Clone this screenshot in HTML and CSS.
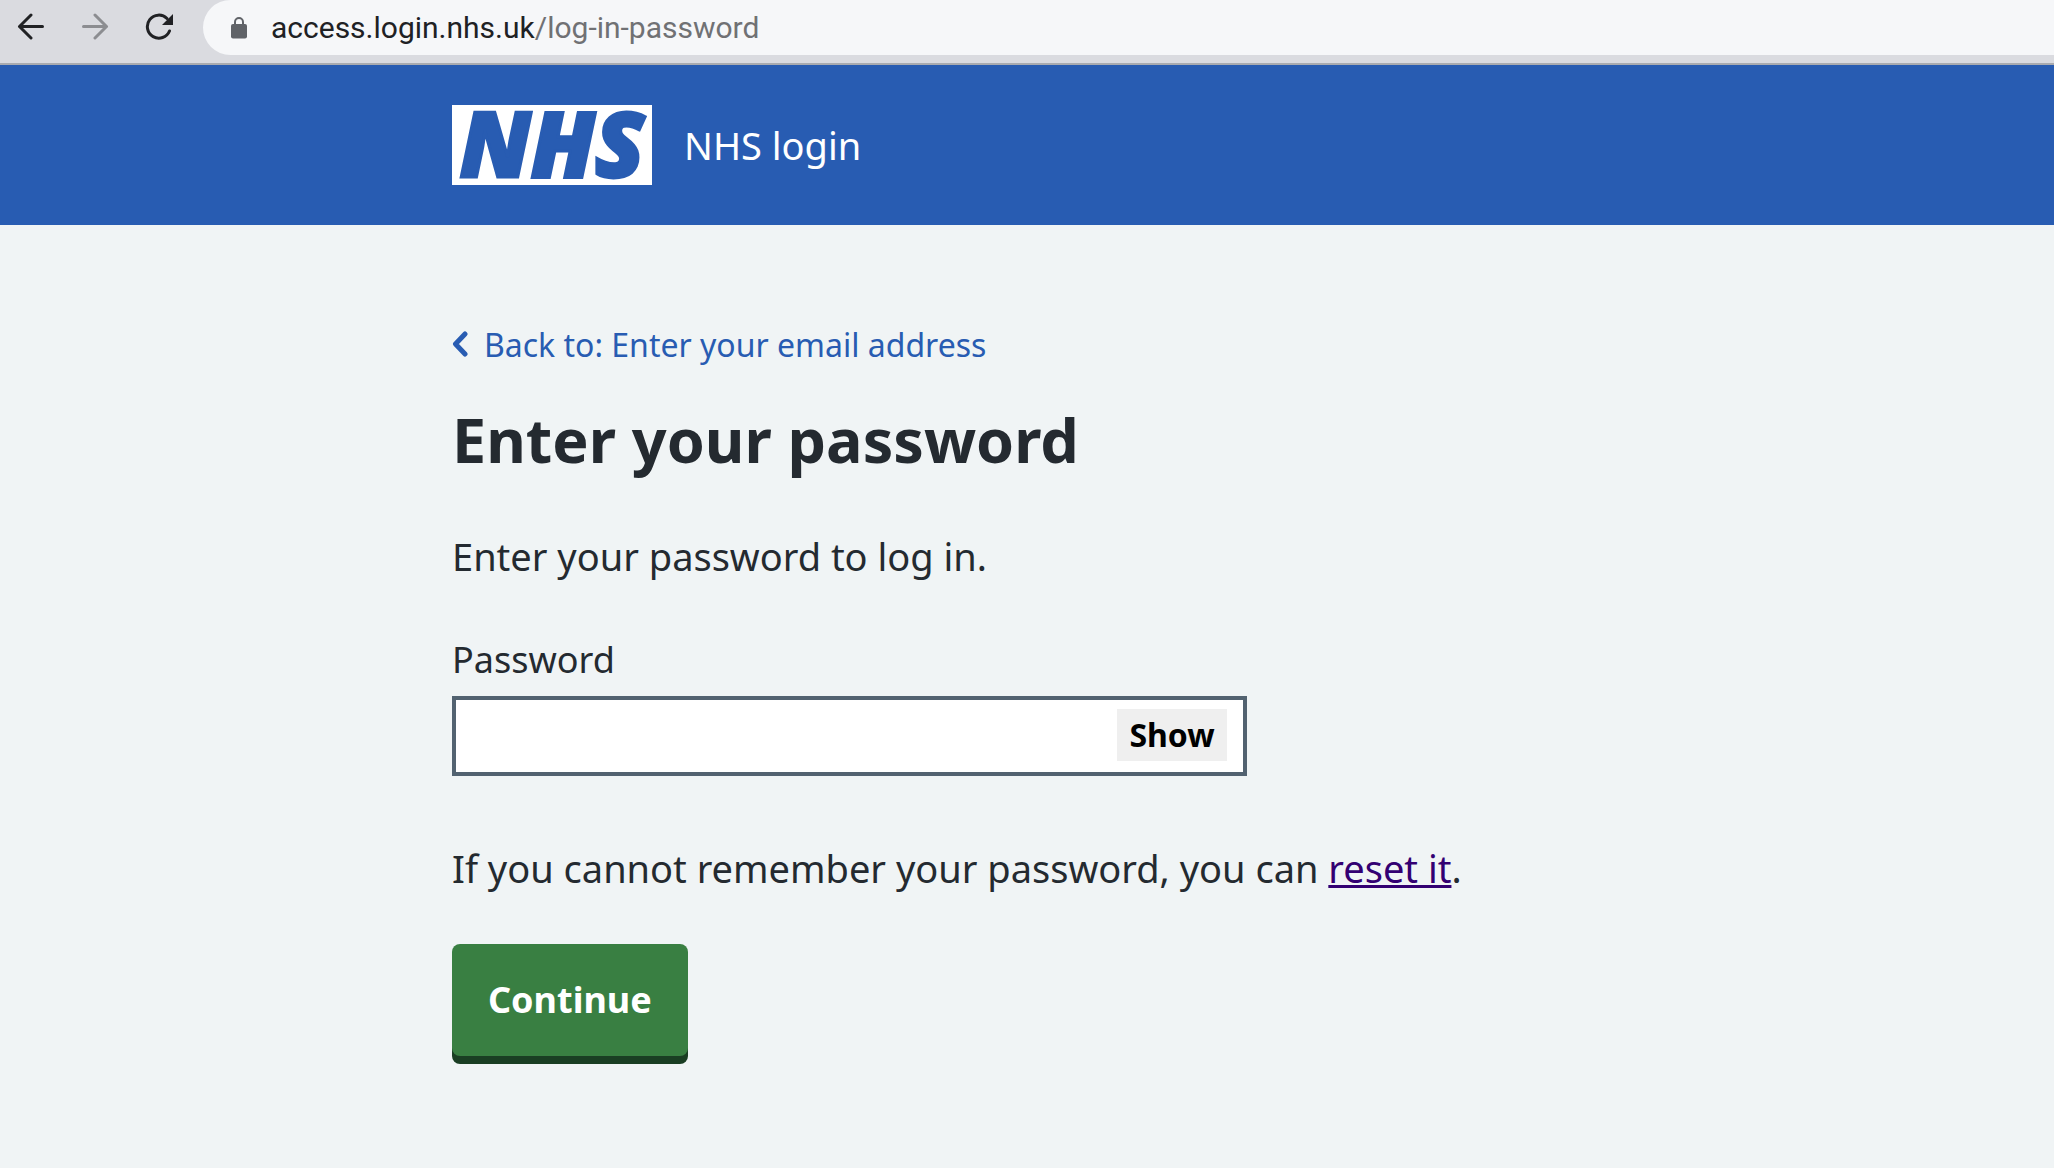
FILE: index.html
```html
<!DOCTYPE html>
<html lang="en">
<head>
    <meta charset="UTF-8">
    <meta name="viewport" content="width=device-width, initial-scale=1.0">
    <title>Enter your password - NHS login</title>
    <link rel="stylesheet" href="styles.css">
</head>
<body>
    <div class="browser-bar">
        <div class="nav-buttons">
            <button class="nav-button" type="button" aria-label="Back">
                <svg width="28" height="28" viewBox="0 0 28 28"><path d="M25.500 14.500H2.500M14 3L2.500 14.500 14 26"/></svg>
            </button>
            <button class="nav-button disabled" type="button" aria-label="Forward">
                <svg width="28" height="28" viewBox="0 0 28 28"><path d="M2.500 14.500h23M14 3l11.500 11.500L14 26"/></svg>
            </button>
            <button class="nav-button" type="button" aria-label="Reload">
                <svg width="28" height="28" viewBox="0 0 28 28"><path d="M24.500 19A11.500 11.500 0 1 1 22 6.500"/><path class="solid" d="M28 2v11H17z"/></svg>
            </button>
        </div>
        <div class="address">
            <svg class="lock" width="16" height="22" viewBox="0 0 16 22"><rect x="0" y="7" width="16" height="14.500" rx="2"/><path d="M4 8V5a4 4 0 0 1 8 0v3"/></svg>
            <span class="url">access.login.nhs.uk<span class="path">/log-in-password</span></span>
        </div>
    </div>

    <header class="header">
        <div class="container header-content">
            <div class="logo">NHS</div>
            <span class="service-name">NHS login</span>
        </div>
    </header>

    <main class="container main">
        <a class="back-link" href="#">
            <svg width="16" height="28" viewBox="0 0 16 28"><path d="M13 3L3.500 13 13 23"/></svg>
            <span>Back to: Enter your email address</span>
        </a>
        <h1>Enter your password</h1>
        <p class="intro">Enter your password to log in.</p>
        <form>
            <label for="password">Password</label>
            <div class="password-field">
                <input type="password" id="password" name="password">
                <button class="show-button" type="button">Show</button>
            </div>
            <p class="reset">If you cannot remember your password, you can <a href="#">reset it</a>.</p>
            <button class="continue-button" type="submit">Continue</button>
        </form>
    </main>
</body>
</html>
```

FILE: styles.css
```css
:root {
    --blue: #285cb2;
    --text: #242a30;
    --background: #f0f4f5;
    --green: #397f42;
    --dark-green: #1a3e23;
    --border: #526270;
    --visited: #330072;
}

* {
    margin: 0;
    padding: 0;
    box-sizing: border-box;
}

body {
    background-color: var(--background);
    color: var(--text);
    font-family: 'Noto Sans', 'Open Sans', sans-serif;
    font-size: 36px;
    line-height: 56px;
}

.browser-bar {
    display: flex;
    align-items: flex-start;
    height: 65px;
    padding-left: 17px;
    background: #dadbe0;
    border-bottom: 2px solid #a9abb0;
}

.nav-buttons {
    display: flex;
    gap: 36px;
    padding: 12px 30px 0 0;
}

.nav-button {
    width: 28px;
    height: 28px;
    background: none;
    border: none;
    cursor: pointer;
}

.nav-button svg {
    display: block;
    fill: none;
    stroke: #202124;
    stroke-width: 3;
    stroke-linecap: round;
    stroke-linejoin: round;
}

.nav-button.disabled svg {
    stroke: #8c8d91;
}

.nav-button .solid {
    fill: #202124;
    stroke: none;
}

.address {
    flex: 1;
    display: flex;
    align-items: center;
    gap: 24px;
    height: 55px;
    padding-left: 28px;
    background: #f6f7f9;
    border-radius: 28px 0 0 28px;
}

.lock rect {
    fill: #606368;
}

.lock path {
    fill: none;
    stroke: #606368;
    stroke-width: 2;
}

.url {
    font-family: Roboto, sans-serif;
    font-size: 30px;
    color: #202124;
}

.url .path {
    color: #707174;
}

.container {
    width: 100%;
    max-width: 1150px;
    margin: 0 auto;
}

.header {
    background: var(--blue);
    padding: 40px 0;
}

.header-content {
    display: flex;
    align-items: center;
    gap: 32px;
}

.logo {
    display: flex;
    justify-content: center;
    width: 200px;
    height: 80px;
    background: #fff;
    color: var(--blue);
    font-family: 'Open Sans', sans-serif;
    font-size: 90px;
    font-style: italic;
    font-weight: 800;
    line-height: 74px;
    -webkit-text-stroke: 3px var(--blue);
}

.service-name {
    color: #fff;
    font-size: 38px;
}

.main {
    padding: 92px 0;
}

.back-link {
    display: inline-flex;
    align-items: center;
    gap: 16px;
    color: var(--blue);
    font-size: 32px;
    text-decoration: none;
}

.back-link svg {
    fill: none;
    stroke: var(--blue);
    stroke-width: 5;
    stroke-linecap: round;
    stroke-linejoin: round;
}

h1 {
    font-size: 61px;
    font-weight: 700;
    line-height: 72px;
    margin: 30px 0 52px;
}

.intro {
    margin-bottom: 48px;
    font-size: 38px;
}

label {
    display: block;
    margin-bottom: 8px;
}

.password-field {
    position: relative;
    max-width: 795px;
    margin-bottom: 64px;
}

.password-field input {
    display: block;
    width: 100%;
    height: 80px;
    padding: 0 140px 0 16px;
    background: #fff;
    border: 4px solid var(--border);
    border-radius: 0;
    font: inherit;
}

.show-button {
    position: absolute;
    top: 13px;
    right: 20px;
    width: 110px;
    height: 52px;
    background: #efefef;
    border: none;
    color: #000;
    font: inherit;
    font-size: 32px;
    font-weight: 700;
    line-height: 52px;
    cursor: pointer;
}

.reset {
    margin-bottom: 48px;
    font-size: 38px;
}

.reset a {
    color: var(--visited);
    text-decoration-thickness: 3px;
}

.continue-button {
    display: block;
    padding: 28px 36px;
    background: var(--green);
    border: none;
    border-radius: 8px;
    box-shadow: 0 8px 0 var(--dark-green);
    color: #fff;
    font: inherit;
    font-weight: 700;
    cursor: pointer;
}
```
